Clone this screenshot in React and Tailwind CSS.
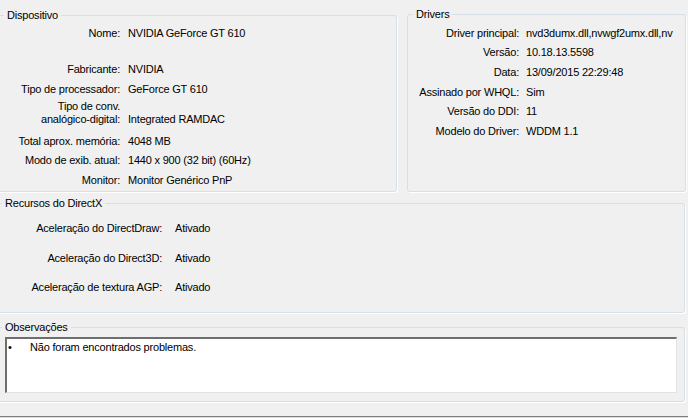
const FONT = { fontFamily: '"Liberation Sans", Arial, sans-serif' }

const DEVICE_ROWS = [
  { mt: 'mt-[5px]', label: 'Nome:', value: 'NVIDIA GeForce GT 610' },
  { mt: 'mt-[23px]', label: 'Fabricante:', value: 'NVIDIA' },
  { mt: 'mt-[7px]', label: 'Tipo de processador:', value: 'GeForce GT 610' },
  { mt: 'mt-[4px]', label: ['Tipo de conv.', 'analógico-digital:'], value: 'Integrated RAMDAC' },
  { mt: 'mt-[9px]', label: 'Total aprox. memória:', value: '4048 MB' },
  { mt: 'mt-[6px]', label: 'Modo de exib. atual:', value: '1440 x 900 (32 bit) (60Hz)' },
  { mt: 'mt-[7px]', label: 'Monitor:', value: 'Monitor Genérico PnP' },
]

const DRIVER_ROWS = [
  { mt: 'mt-[6px]', label: 'Driver principal:', value: 'nvd3dumx.dll,nvwgf2umx.dll,nv' },
  { mt: 'mt-[6px]', label: 'Versão:', value: '10.18.13.5598' },
  { mt: 'mt-[7px]', label: 'Data:', value: '13/09/2015 22:29:48' },
  { mt: 'mt-[7px]', label: 'Assinado por WHQL:', value: 'Sim' },
  { mt: 'mt-[6px]', label: 'Versão do DDI:', value: '11' },
  { mt: 'mt-[7px]', label: 'Modelo do Driver:', value: 'WDDM 1.1' },
]

const DX_ROWS = [
  { mt: 'mt-[12px]', label: 'Aceleração do DirectDraw:', value: 'Ativado' },
  { mt: 'mt-[17px]', label: 'Aceleração do Direct3D:', value: 'Ativado' },
  { mt: 'mt-[16px]', label: 'Aceleração de textura AGP:', value: 'Ativado' },
]

function Group({ title, legendClass, className, children }) {
  return (
    <fieldset
      className={`box-border rounded-[3px] border border-[#d5dfe5] shadow-[1px_1px_0_#ffffff] ${className}`}
    >
      <legend className={`px-[3px] text-[11px] leading-[14px] ${legendClass}`}>{title}</legend>
      {children}
    </fieldset>
  )
}

export default function App() {
  return (
    <div
      className="h-[418px] w-[688px] overflow-hidden bg-[#f0f0f0] pt-[8px] text-[11px] leading-[13px] tracking-[-0.2px] text-black"
      style={FONT}
    >
      {/* linha superior: Dispositivo + Drivers */}
      <div className="flex items-start">
        <Group title="Dispositivo" legendClass="ml-[6px]" className="-ml-[3px] h-[184px] w-[400px]">
          {DEVICE_ROWS.map(({ mt, label, value }) => (
            <div key={value} className={`flex items-end ${mt}`}>
              <div className="w-[122px] shrink-0 text-right whitespace-nowrap">
                {Array.isArray(label) ? label.map((l) => <div key={l}>{l}</div>) : label}
              </div>
              <div className="ml-[8px] whitespace-nowrap">{value}</div>
            </div>
          ))}
        </Group>

        <Group title="Drivers" legendClass="ml-[5px]" className="-mt-px ml-[10px] h-[185px] w-[279px]">
          {DRIVER_ROWS.map(({ mt, label, value }) => (
            <div key={label} className={`flex ${mt}`}>
              <div className="w-[111px] shrink-0 text-right whitespace-nowrap">{label}</div>
              <div className="ml-[7px] whitespace-nowrap">{value}</div>
            </div>
          ))}
        </Group>
      </div>

      {/* Recursos do DirectX */}
      <Group title="Recursos do DirectX" legendClass="ml-[4px]" className="mt-[4px] -ml-[3px] h-[117px] w-[688px]">
        {DX_ROWS.map(({ mt, label, value }) => (
          <div key={label} className={`flex ${mt}`}>
            <div className="w-[164px] shrink-0 text-right whitespace-nowrap">{label}</div>
            <div className="ml-[13px] whitespace-nowrap">{value}</div>
          </div>
        ))}
      </Group>

      {/* Observações */}
      <Group title="Observações" legendClass="ml-[4px]" className="mt-[7px] -ml-[3px] h-[82px] w-[688px]">
        <div className="mt-[3px] ml-[7px] box-border h-[56px] w-[672px] border-t-2 border-l-2 border-r border-b border-t-[#6e6e6e] border-l-[#6e6e6e] border-r-[#e3e3e3] border-b-[#e3e3e3] bg-white pt-[2px]">
          <div className="flex">
            <span className="ml-[1px] w-[22px]">•</span>
            <span>Não foram encontrados problemas.</span>
          </div>
        </div>
      </Group>

      <div className="mt-[14px] h-[2px] border-t border-[#7d7d7d] bg-[#dcdcdc]" />
    </div>
  )
}
